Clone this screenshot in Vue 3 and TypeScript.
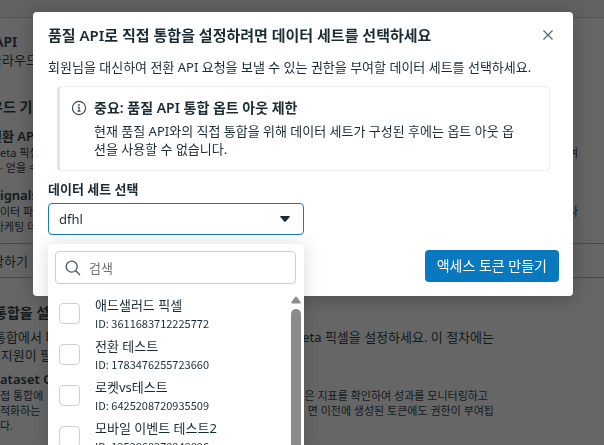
<script setup lang="ts">
import { ref } from 'vue'

interface DataSet {
  name: string
  id: string
}

const dataSets: DataSet[] = [
  { name: '애드샐러드 픽셀', id: '3611683712225772' },
  { name: '전환 테스트', id: '1783476255723660' },
  { name: '로켓vs테스트', id: '6425208720935509' },
  { name: '모바일 이벤트 테스트2', id: '1252868278848896' },
]

const current = ref('dfhl')
const query = ref('')
const checked = ref<string[]>([])
</script>

<template>
  <div class="screen">
    <main class="page">
      <div class="topbar"></div>
      <section class="intro">
        <h1>API</h1>
        <p>클라우드</p>
      </section>
      <section class="methods">
        <h2>우드 기</h2>
        <h3>전환 API</h3>
        <p class="split"><span>eta 픽셀</span><span>여</span></p>
        <p>· 얻을 수</p>
        <h3 class="flush">ignals</h3>
        <p class="split"><span>이터 파</span><span>사</span></p>
        <p class="shifted">마케팅 데</p>
      </section>
      <div class="bar"><button type="button">작하기</button></div>
      <section class="direct">
        <h2>통합을 설</h2>
        <p class="split large"><span>통합에서 더</span><span>eta 픽셀을 설정하세요. 이 절차에는</span></p>
        <p class="large">&nbsp;&nbsp;지원이 필</p>
        <h3>ataset Q</h3>
        <p class="split short"><span>접 통합에</span><span>은 지표를 확인하여 성과를 모니터링하고</span></p>
        <p class="split"><span>적화하는</span><span>면 이전에 생성된 토큰에도 권한이 부여됩</span></p>
        <p>다.</p>
      </section>
    </main>

    <div class="overlay">
      <div class="dialog" role="dialog" aria-labelledby="dialog-title">
        <header class="head">
          <h2 id="dialog-title">품질 API로 직접 통합을 설정하려면 데이터 세트를 선택하세요</h2>
          <button class="close" type="button" aria-label="닫기">
            <svg viewBox="0 0 12 12" width="12" height="12"><path d="M1.5 1.5l9 9M10.5 1.5l-9 9" /></svg>
          </button>
        </header>
        <p class="lead">회원님을 대신하여 전환 API 요청을 보낼 수 있는 권한을 부여할 데이터 세트를 선택하세요.</p>

        <div class="notice">
          <svg class="info" viewBox="0 0 16 16" width="16" height="16">
            <circle class="ring" cx="8" cy="8" r="6.6" />
            <circle class="dot" cx="8" cy="5" r="0.9" />
            <path class="ring" d="M6.8 7.4H8.1V11M6.6 11.1H9.5" />
          </svg>
          <div>
            <h3>중요: 품질 API 통합 옵트 아웃 제한</h3>
            <p>현재 품질 API와의 직접 통합을 위해 데이터 세트가 구성된 후에는 옵트 아웃 옵션을 사용할 수 없습니다.</p>
          </div>
        </div>

        <div class="field">
          <label for="data-set">데이터 세트 선택</label>
          <div class="select">
            <select id="data-set" v-model="current">
              <option value="dfhl">dfhl</option>
            </select>
            <svg class="caret" viewBox="0 0 10 6" width="10" height="6"><path d="M0.8 0H9.2Q10.3 0 9.6 1L6 5.2Q5 6.3 4 5.2L0.4 1Q-0.3 0 0.8 0Z" /></svg>
          </div>

          <div class="menu">
            <div class="search">
              <svg viewBox="0 0 16 16" width="16" height="16"><circle cx="6.7" cy="6.7" r="5.5" /><path d="M10.8 10.8L15 15" /></svg>
              <input v-model="query" type="search" placeholder="검색" aria-label="검색" />
            </div>
            <div class="results">
              <ul>
                <li v-for="set in dataSets" :key="set.id">
                  <label>
                    <input v-model="checked" type="checkbox" :value="set.id" />
                    <span class="text">
                      <span class="name">{{ set.name }}</span>
                      <span class="id">ID: {{ set.id }}</span>
                    </span>
                  </label>
                </li>
              </ul>
              <div class="scroll">
                <svg viewBox="0 0 10 8" width="10" height="8"><path d="M4.2 0.9Q5 0 5.8 0.9L9.6 6Q10 7.5 8.8 7.5H1.2Q0 7.5 0.4 6Z" /></svg>
                <div class="thumb"></div>
              </div>
            </div>
          </div>
        </div>

        <footer class="foot">
          <button class="primary" type="button">액세스 토큰 만들기</button>
        </footer>
      </div>
    </div>
  </div>
</template>

<style>
body {
  margin: 0;
  overflow: hidden;
}
</style>

<style scoped>
* {
  box-sizing: border-box;
}

.screen {
  min-height: 100vh;
  background: #666;
  color: #1c2b33;
  font-family: "Noto Sans", "Noto Sans CJK KR", sans-serif;
  font-size: 13px;
  line-height: 18px;
}

h1,
h2,
h3,
p,
ul {
  margin: 0;
  padding: 0;
}

button,
input,
select {
  font: inherit;
  color: inherit;
}

/* Page behind the dialog */
.page {
  height: 100vh;
  overflow: hidden;
  color: #14191c;
  white-space: nowrap;
}

.topbar {
  height: 18px;
  background: #626262;
  border-bottom: 1px solid #555;
}

.page h1,
.page h2 {
  margin-left: -6px;
  font-size: 14px;
  font-weight: 600;
  line-height: 18px;
}

.page h3 {
  font-size: 13px;
  font-weight: 600;
  line-height: 18px;
}

.page p {
  font-size: 11px;
  line-height: 15px;
}

.page p.large,
.intro p {
  font-size: 13px;
  line-height: 18px;
}

.intro {
  padding-top: 15px;
}

.intro p {
  margin-left: -10px;
}

.methods {
  padding-top: 29px;
}

.methods h2,
.methods h3 {
  margin-left: -10px;
}

.methods h3 {
  margin-top: 11px;
}

.methods h3.flush {
  margin-left: 0;
}

.methods .shifted {
  margin-left: -6px;
}

.split {
  display: flex;
  justify-content: space-between;
  padding-right: 26px;
}

.bar {
  margin-top: 9px;
  border: solid #4a4a4a;
  border-width: 1px 0;
}

.bar button {
  height: 33px;
  margin-left: -8px;
  padding: 0;
  border: 0;
  background: none;
}

.direct {
  padding-top: 26px;
}

.direct p.large {
  margin-left: -6px;
}

.direct .split {
  padding-right: 110px;
}

.direct .short {
  padding-right: 116px;
}

.direct h2 {
  margin-bottom: 6px;
}

.direct h3 {
  margin-top: 6px;
}

/* Dialog */
.overlay {
  position: fixed;
  inset: 0;
  overflow: hidden;
  padding: 12px 31px 0 33px;
}

.dialog {
  display: flex;
  flex-direction: column;
  max-width: 600px;
  margin: 0 auto;
  padding: 14px 14px 14px 15px;
  border-radius: 4px;
  background: #fff;
  box-shadow: 0 2px 20px rgba(0, 0, 0, 0.25);
}

.head {
  display: flex;
  align-items: center;
  justify-content: space-between;
}

.head h2 {
  font-size: 15px;
  font-weight: 600;
  line-height: 18px;
}

.close {
  display: flex;
  padding: 3px 5px;
  border: 0;
  background: none;
}

.close path {
  fill: none;
  stroke: #5b6770;
  stroke-width: 1.3;
}

.lead {
  margin-top: 14px;
}

.notice {
  display: flex;
  gap: 7px;
  margin: 10px 9px 0;
  padding: 12px 28px 12px 11px;
  border: 1px solid #eee;
  border-left: 3px solid #e2e4e6;
  border-radius: 4px;
}

.info {
  flex: none;
  margin-top: 1px;
}

.ring {
  fill: none;
  stroke: #38454d;
  stroke-width: 1.1;
}

.dot {
  fill: #38454d;
}

.notice h3 {
  font-size: 14px;
  font-weight: 600;
  line-height: 18px;
}

.notice p {
  margin-top: 5px;
}

.field {
  position: relative;
  width: 256px;
  margin-top: 9px;
}

.field > label {
  display: block;
  font-weight: 600;
}

.select {
  display: grid;
  align-items: center;
  margin-top: 5px;
}

.select > * {
  grid-area: 1 / 1;
}

.select select {
  appearance: none;
  width: 100%;
  height: 32px;
  padding: 0 10px;
  border: 1px solid #1877b8;
  border-radius: 4px;
  background: #fff;
}

.caret {
  justify-self: end;
  margin-right: 14px;
  fill: #1c2b33;
  pointer-events: none;
}

.menu {
  position: absolute;
  top: 100%;
  left: 0;
  width: 100%;
  margin-top: 9px;
  padding: 7px 0 0 7px;
  border-radius: 4px;
  background: #fff;
  box-shadow: 0 2px 20px rgba(0, 0, 0, 0.16);
}

.search {
  display: flex;
  align-items: center;
  gap: 8px;
  height: 33px;
  margin-right: 8px;
  padding: 0 9px;
  border: 1px solid #ccd0d3;
  border-radius: 4px;
}

.search svg {
  flex: none;
  fill: none;
  stroke: #4a555c;
  stroke-width: 1.3;
}

.search input {
  flex: 1;
  min-width: 0;
  padding: 0;
  border: 0;
  outline: 0;
  background: none;
}

.search input::placeholder {
  color: #707070;
}

.results {
  display: flex;
  justify-content: space-between;
  padding: 9px 3px 0 4px;
}

.results ul {
  list-style: none;
}

.results label {
  display: flex;
  align-items: center;
  gap: 15px;
  height: 41px;
}

.results input {
  appearance: none;
  flex: none;
  width: 21px;
  height: 21px;
  margin: 0;
  border: 1px solid #ccd0d3;
  border-radius: 4px;
  background: #fff;
}

.text {
  display: grid;
}

.id {
  font-family: "Noto Sans CJK KR", sans-serif;
  font-size: 11px;
}

.scroll {
  display: flex;
  flex-direction: column;
  gap: 5px;
  padding-top: 3px;
  fill: #8b8b8b;
}

.thumb {
  flex: 1;
  border-radius: 5px;
  background: #8b8b8b;
}

.foot {
  display: flex;
  justify-content: flex-end;
  margin-top: 15px;
}

.primary {
  height: 32px;
  padding: 0 12px;
  border: 0;
  border-radius: 4px;
  background: #0a78be;
  color: #fff;
  font-size: 14px;
}
</style>
